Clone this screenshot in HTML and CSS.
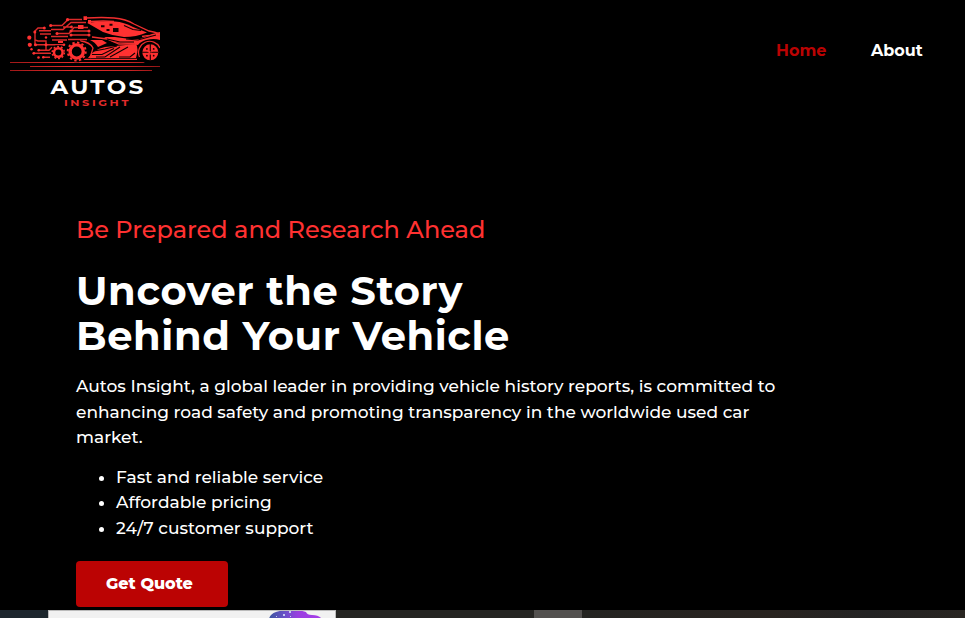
FILE: index.html
```html
<!DOCTYPE html>
<html lang="en">
<head>
<meta charset="utf-8">
<title>Autos Insight</title>
<link rel="stylesheet" href="styles.css">
</head>
<body>
<header class="header">
  <svg class="logo" viewBox="10 10 150 100" role="img" aria-label="Autos Insight">
    <defs><linearGradient id="fade" gradientUnits="userSpaceOnUse" x1="10" x2="160" y1="0" y2="0"><stop offset="0" stop-color="#a01818"/><stop offset=".4" stop-color="#e02828"/><stop offset=".8" stop-color="#c92323"/><stop offset="1" stop-color="#901515"/></linearGradient></defs>
    <path class="speed" stroke="url(#fade)" d="M10 62.500H155M30 66.500H160M10 70.500H152"/>
    <path class="circuit" d="M44.300 28H38l-3 3v9l3 1h8v4M39 30.700h12M40 34h11M50.700 25.500H62l6-6h14M51 29.500h12l8-7h15M57 33.500h12l5-6h14M51 36.500h17M52 40h15M34 44.700h30M38.700 50.300H49l3-3M33.700 53.300H51M43 57.300h7M35 40v5M46 41v10M71 31h18M71 35h18M68 39.500h19M63 27h8"/>
    <g class="fill">
      <circle cx="44.300" cy="28" r="1.500"/><circle cx="34.800" cy="32" r="1.500"/><circle cx="29.300" cy="37.700" r="2.100"/><circle cx="29.800" cy="44.800" r="2.100"/><circle cx="31.500" cy="49.200" r="1.200"/><circle cx="33.800" cy="53.300" r="1.400"/><circle cx="38.500" cy="57.500" r="1.300"/><circle cx="43.300" cy="57.300" r="1.300"/><circle cx="38.700" cy="50.300" r="1.300"/><circle cx="50.700" cy="25.500" r="1.600"/><circle cx="67.500" cy="19.700" r="1.600"/><circle cx="57" cy="33.500" r="1.500"/><circle cx="46" cy="37.500" r="1.200"/><circle cx="35.500" cy="44.800" r="1.500"/><circle cx="46" cy="44.700" r="1.500"/><circle cx="64" cy="44.700" r="1.300"/><circle cx="71" cy="31" r="1.500"/><circle cx="71" cy="35" r="1.500"/><circle cx="89" cy="31" r="1.500"/><circle cx="89" cy="35" r="1.500"/><circle cx="71.500" cy="27" r="1.400"/>
      <path d="M78 25h5.500v4H78zM83.500 16.300H87V20h-3.500zM88 20h3v3.300h-3zM58 41h5v2h-5z"/>
      <path d="M87 22.800Q103 20.500 115 21.500Q124 22 133 27L147 32.500Q136 37 124 37Q113 36 103 32Z"/>
      <path d="M88 58Q94 49 105 47L136 44Q139 48 136 58Z"/>
      <path d="M90 40h12l5 3-9 4q-3-5-8-7z"/>
      <path d="M104 37h11l15 2h10l12-5 8-2v8q-6-2-14 0-6 2-8 5l-11-1-14-2z"/>
    </g>
    <path class="body-line" d="M86 18q17-1 28 0 12 1 20 6l15 7q6 1 11 3M91 21.500q13-1 23 0M92 37l15 2 12 5h16M80 41q10 1 13 7l-3 10M83 59.300h54M142 36.500q9-2 18-.5"/>
    <path class="holes" d="M101 25.300h3.500v2H101zM109.500 23.800h3v2h-3zM106.500 29h3v2h-3zM113 28h5.500v4H113z"/>
    <path class="cuts" d="M94 51l11-2 12-3M92 54.500h10l12-6M96 57h9l15-10M110 57l18-10M119 57h11l5-4M107 39l13 3h14M126 39l12 1 18-5M124 25.500l9 4 8 1"/>
    <circle class="tire" cx="150" cy="52" r="12"/>
    <path class="tread" d="M139.500 57a11 11 0 0 1 20.500-9"/>
    <circle class="fill" cx="150.300" cy="52.300" r="8"/>
    <path class="cuts" d="M150.300 44v16.500M142 52.300h16.500"/>
    <g class="fill"><path d="M149 51h2.600v2.600H149zM147 49l6.500 6.500-1 1-6.500-6.500zM153 49l-6.500 6.500 1 1L154 50z"/></g>
    <g class="holes"><circle cx="146.900" cy="48.900" r=".9"/><circle cx="153.700" cy="48.900" r=".9"/><circle cx="146.900" cy="55.700" r=".9"/><circle cx="153.700" cy="55.700" r=".9"/></g>
    <circle class="tire" cx="76.700" cy="51.500" r="10.800"/>
    <circle class="gear" cx="76.700" cy="51.500" r="6.600"/>
    <circle class="teeth" cx="76.700" cy="51.500" r="9"/>
    <circle class="tire" cx="58.300" cy="52.500" r="7.500"/>
    <circle class="gear small" cx="58.300" cy="52.500" r="4.300"/>
    <circle class="teeth small" cx="58.300" cy="52.500" r="6.100"/>
    <text class="brand" x="50.500" y="94" textLength="95" lengthAdjust="spacingAndGlyphs">AUTOS</text>
    <text class="brand-sub" x="64" y="106" textLength="67" lengthAdjust="spacingAndGlyphs">INSIGHT</text>
  </svg>
  <nav class="nav">
    <a class="active home">Home</a>
    <a class="about">About</a>
  </nav>
</header>
<main class="hero">
  <p class="eyebrow">Be Prepared and Research Ahead</p>
  <h1>Uncover the Story<br>Behind Your Vehicle</h1>
  <p class="lead">Autos Insight, a global leader in providing vehicle history reports, is committed to<br>enhancing road safety and promoting transparency in the worldwide used car<br>market.</p>
  <ul>
    <li>Fast and reliable service</li>
    <li>Affordable pricing</li>
    <li>24/7 customer support</li>
  </ul>
  <a class="button">Get Quote</a>
</main>
<footer class="taskbar">
  <div class="start"></div>
  <div class="search">
    <svg viewBox="0 0 54 8" class="art">
      <defs><linearGradient id="violet"><stop offset="0" stop-color="#3d55a0"/><stop offset=".3" stop-color="#6a50c8"/><stop offset=".55" stop-color="#9a3fe0"/><stop offset="1" stop-color="#a63ce8"/></linearGradient></defs>
      <path fill="url(#violet)" d="M0 8Q1 3 7 1Q12-1 20 0Q28-2 37 1Q38 4 43 4Q50 4 53 8Z"/>
      <path fill="#c5caf0" d="M14 3h2v2h-2zM20 0h2v2h-2zM7 5h1v1H7zM21 5h1v1h-1z"/>
    </svg>
  </div>
  <div class="gap"></div>
  <div class="running"></div>
  <div class="rest"></div>
</footer>
</body>
</html>
```
FILE: styles.css
```css
* { box-sizing: border-box; }
body {
  margin: 0;
  height: 618px;
  overflow: hidden;
  display: flex;
  flex-direction: column;
  background: #000;
  color: #fff;
  font-family: Montserrat, Inter, "Liberation Sans", sans-serif;
}
.header {
  height: 110px;
  flex: none;
  display: flex;
  justify-content: space-between;
  padding: 10px 42px 0 10px;
}
.logo { width: 150px; height: 100px; }
.speed { fill: none; stroke-width: 1; }
.circuit { fill: none; stroke: #dc2a2a; stroke-width: 1.4; }
.body-line { fill: none; stroke: #f02e2e; stroke-width: 1.3; }
.fill { fill: #ff3131; }
.holes { fill: #180000; }
.cuts { fill: none; stroke: #100; stroke-width: 1.1; }
.tire { fill: #000; }
.tread { fill: none; stroke: #f22d2d; stroke-width: 1.2; }
.gear { fill: none; stroke: #ff3131; stroke-width: 3.4; }
.gear.small { stroke-width: 2.5; }
.teeth { fill: none; stroke: #ff3131; stroke-width: 2; stroke-dasharray: 2.36 2.352; }
.teeth.small { stroke-width: 1.5; stroke-dasharray: 1.92 1.91; }
.brand { fill: #fff; font-size: 20px; font-weight: 700; letter-spacing: 2px; }
.brand-sub { fill: #e22b2b; font-size: 8.6px; font-weight: 700; letter-spacing: 2px; }
.nav {
  display: flex;
  gap: 45px;
  height: 80px;
  align-items: center;
  font-size: 16px;
  font-weight: 700;
}
.nav a { width: 50px; white-space: nowrap; }
.nav .about { width: 52px; }
.nav .active { color: #bb0303; }
.hero { flex: none; height: 500px; padding: 105px 76px 0; white-space: nowrap; }
p, h1, ul { margin: 0; }
.eyebrow { font-size: 24px; line-height: 30px; font-weight: 500; color: #ff3131; }
h1 { margin-top: 23px; font-size: 40px; line-height: 45px; font-weight: 700; letter-spacing: .6px; }
.lead { margin-top: 16px; font-size: 17px; line-height: 25.5px; font-weight: 500; }
ul { margin-top: 14px; padding-left: 40px; font-size: 17px; line-height: 25.5px; font-weight: 500; }
.button {
  display: flex;
  width: 152px;
  height: 46px;
  margin-top: 20px;
  padding: 0 0 2px 30px;
  align-items: center;
  border-radius: 4px;
  background: #bb0303;
  font-size: 16px;
  font-weight: 800;
}
.taskbar { display: flex; height: 8px; flex: none; }
.start { width: 48px; background: #1d262d; }
.search { width: 288px; padding-left: 220px; background: #f1f1f1; border: solid #bbb; border-width: 1px 1px 0; }
.art { display: block; width: 54px; height: 8px; }
.gap { width: 198px; background: #252522; }
.running { width: 48px; background: #53514f; }
.rest { flex: 1; background: linear-gradient(90deg, #242421, #292420 50%, #232323 75%, #292521); }
```
